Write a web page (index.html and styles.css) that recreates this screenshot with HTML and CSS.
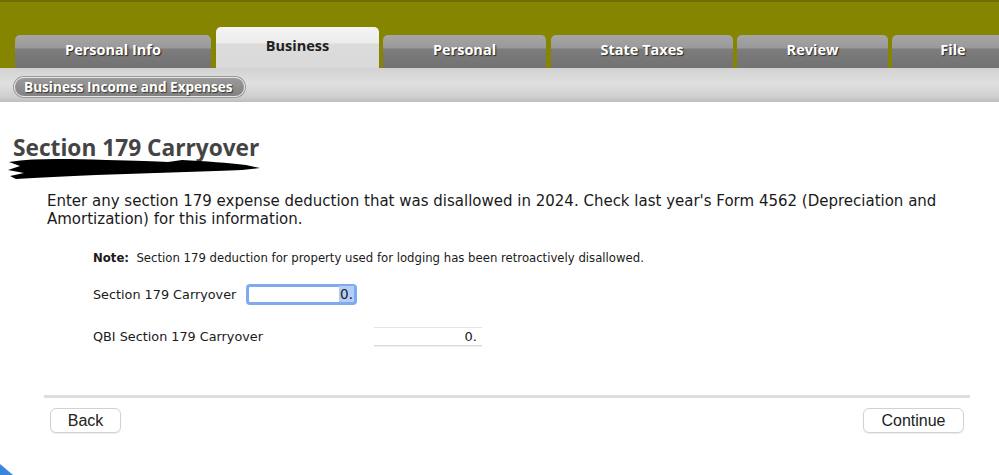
FILE: index.html
```html
<!DOCTYPE html>
<html>
<head>
<meta charset="utf-8">
<link rel="stylesheet" href="styles.css">
</head>
<body>
<div class="page">
  <header class="topbar">
    <nav class="tabs">
      <div class="tab t-info">Personal Info</div>
      <div class="tab active t-biz">Business</div>
      <div class="tab t-personal">Personal</div>
      <div class="tab t-state">State Taxes</div>
      <div class="tab t-review">Review</div>
      <div class="tab t-file">File</div>
    </nav>
  </header>
  <div class="subbar">
    <span class="pill">Business Income and Expenses</span>
  </div>
  <main class="content">
    <div class="title-wrap">
      <h1 class="title">Section 179 Carryover</h1>
      <svg class="scribble" width="260" height="24" viewBox="0 0 260 24">
        <path d="M3 5 C30 1 60 2 100 3 C130 4 150 4 162 5 L176 3 C200 4 222 6 240 8 L254 11 L236 13 C220 14 200 14 180 15 C150 16 120 17 90 18 C60 19 32 21 10 22 L4 19 L18 16 L2 13 L14 9 Z" fill="#000"/>
      </svg>
    </div>
    <p class="intro">Enter any section 179 expense deduction that was disallowed in 2024. Check last year's Form 4562 (Depreciation and Amortization) for this information.</p>
    <p class="note"><b>Note:</b>&nbsp;&nbsp;Section 179 deduction for property used for lodging has been retroactively disallowed.</p>
    <div class="field field-a">
      <label class="label">Section 179 Carryover</label>
      <div class="input focused"><span class="sel">0.</span></div>
    </div>
    <div class="field field-b">
      <label class="label">QBI Section 179 Carryover</label>
      <div class="input">0.</div>
    </div>
    <div class="rule"></div>
    <div class="actions">
      <button class="btn btn-back">Back</button>
      <button class="btn btn-continue">Continue</button>
    </div>
  </main>
  <svg class="corner" width="14" height="12" viewBox="0 0 14 12"><polygon points="0,1 13,12 0,12" fill="#3a86de"/></svg>
</div>
</body>
</html>
```
FILE: styles.css
```css
* { box-sizing: border-box; }
html, body { margin: 0; padding: 0; background: #fff; }
body { width: 999px; height: 475px; overflow: hidden; font-family: "DejaVu Sans", "Noto Sans", sans-serif; color: #222; }
.page { position: relative; width: 999px; height: 475px; overflow: hidden; }

.topbar {
  height: 68px;
  background: #868500;
  border-top: 2px solid #6f6e00;
  display: flex;
  align-items: flex-end;
  overflow: hidden;
}
.tabs { display: flex; align-items: flex-end; padding-left: 15px; gap: 4px; white-space: nowrap; }
.tab {
  flex: none;
  height: 33px;
  border-radius: 5px 5px 0 0;
  background: linear-gradient(#a6a6a6 0, #999 13px, #7c7c7c 14px, #727272 100%);
  color: #fff;
  font-family: "Open Sans", "DejaVu Sans", sans-serif;
  font-weight: 700;
  font-size: 14.5px;
  text-align: center;
  line-height: 30px;
  text-shadow: 1px 1px 1px #2a2a2a;
}
.tab.active {
  height: 41px;
  background: linear-gradient(#f4f4f4 0, #ececec 16px, #dcdcdc 17px, #d9d9d9 100%);
  color: #1e1e1e;
  text-shadow: none;
  line-height: 38px;
}
.t-info { width: 196px; margin-right: 1px; }
.t-biz { width: 163px; }
.t-personal { width: 163px; margin-right: 1px; }
.t-state { width: 182px; }
.t-review { width: 151px; }
.t-file { width: 122px; }

.subbar {
  height: 34px;
  background: linear-gradient(#d2d2d2 0, #e0e0e0 45%, #cfcfcf 85%, #bdbdbd 100%);
  padding: 9px 0 0 14px;
}
.pill {
  display: inline-block;
  height: 20px;
  width: 231px;
  padding: 0 9px;
  border-radius: 10px;
  background: linear-gradient(#9a9a9a, #828282);
  border: 1px solid #e6e6e6;
  box-shadow: 0 0 0 1px #9a9a9a;
  color: #fff;
  font-family: "Open Sans", "DejaVu Sans", sans-serif;
  font-weight: 700;
  font-size: 13.6px;
  line-height: 18px;
  text-shadow: 1px 1px 1px #333;
  white-space: nowrap;
}

.content { padding: 0 29px 0 0; }
.title-wrap { position: relative; padding: 33px 0 0 13px; }
.title {
  margin: 0;
  font-family: "Open Sans", "DejaVu Sans", sans-serif;
  font-weight: 700;
  font-size: 22.7px;
  line-height: 26px;
  color: #444;
}
.scribble { position: absolute; left: 6px; top: 55px; }
.intro {
  margin: 31px 0 0 47px;
  font-size: 15px;
  line-height: 18px;
  color: #1a1a1a;
}
.note {
  margin: 22px 0 0 93px;
  font-size: 11.7px;
  line-height: 16px;
  color: #1a1a1a;
}
.field { display: flex; align-items: center; margin-left: 93px; height: 20px; }
.field-a { margin-top: 18px; }
.field-b { margin-top: 22px; }
.label { font-size: 12.8px; color: #1a1a1a; }
.field-a .label { width: 153px; }
.field-b .label { width: 281px; }
.input {
  width: 108px;
  height: 19px;
  background: #fff;
  border-top: 1px solid #e6e6e6;
  border-bottom: 1px solid #d8d8d8;
  box-shadow: 0 1px 1px rgba(0,0,0,0.06);
  text-align: right;
  font-size: 13px;
  line-height: 18px;
  padding-right: 5px;
  color: #1a1a1a;
}
.input.focused {
  width: 111px;
  height: 21px;
  border: 3px solid #80a9ee;
  border-radius: 4px;
  box-shadow: none;
  line-height: 15px;
  padding-right: 0;
  font-size: 13.5px;
}
.sel { background: #b2cdf6; padding: 0 1px; }

.rule { height: 3px; background: #dedede; margin: 49px 0 0 44px; }
.actions { display: flex; justify-content: space-between; margin: 10px 6px 0 50px; }
.btn {
  height: 25px;
  background: #fff;
  border: 1px solid #d2d2d2;
  border-radius: 6px;
  box-shadow: 0 1px 1px rgba(0,0,0,0.08);
  font-family: "Liberation Sans", Arial, sans-serif;
  font-size: 16px;
  line-height: 22px;
  color: #222;
  padding: 0;
}
.btn-back { width: 71px; }
.btn-continue { width: 101px; }
.corner { position: absolute; left: 0; bottom: 0; }
```
